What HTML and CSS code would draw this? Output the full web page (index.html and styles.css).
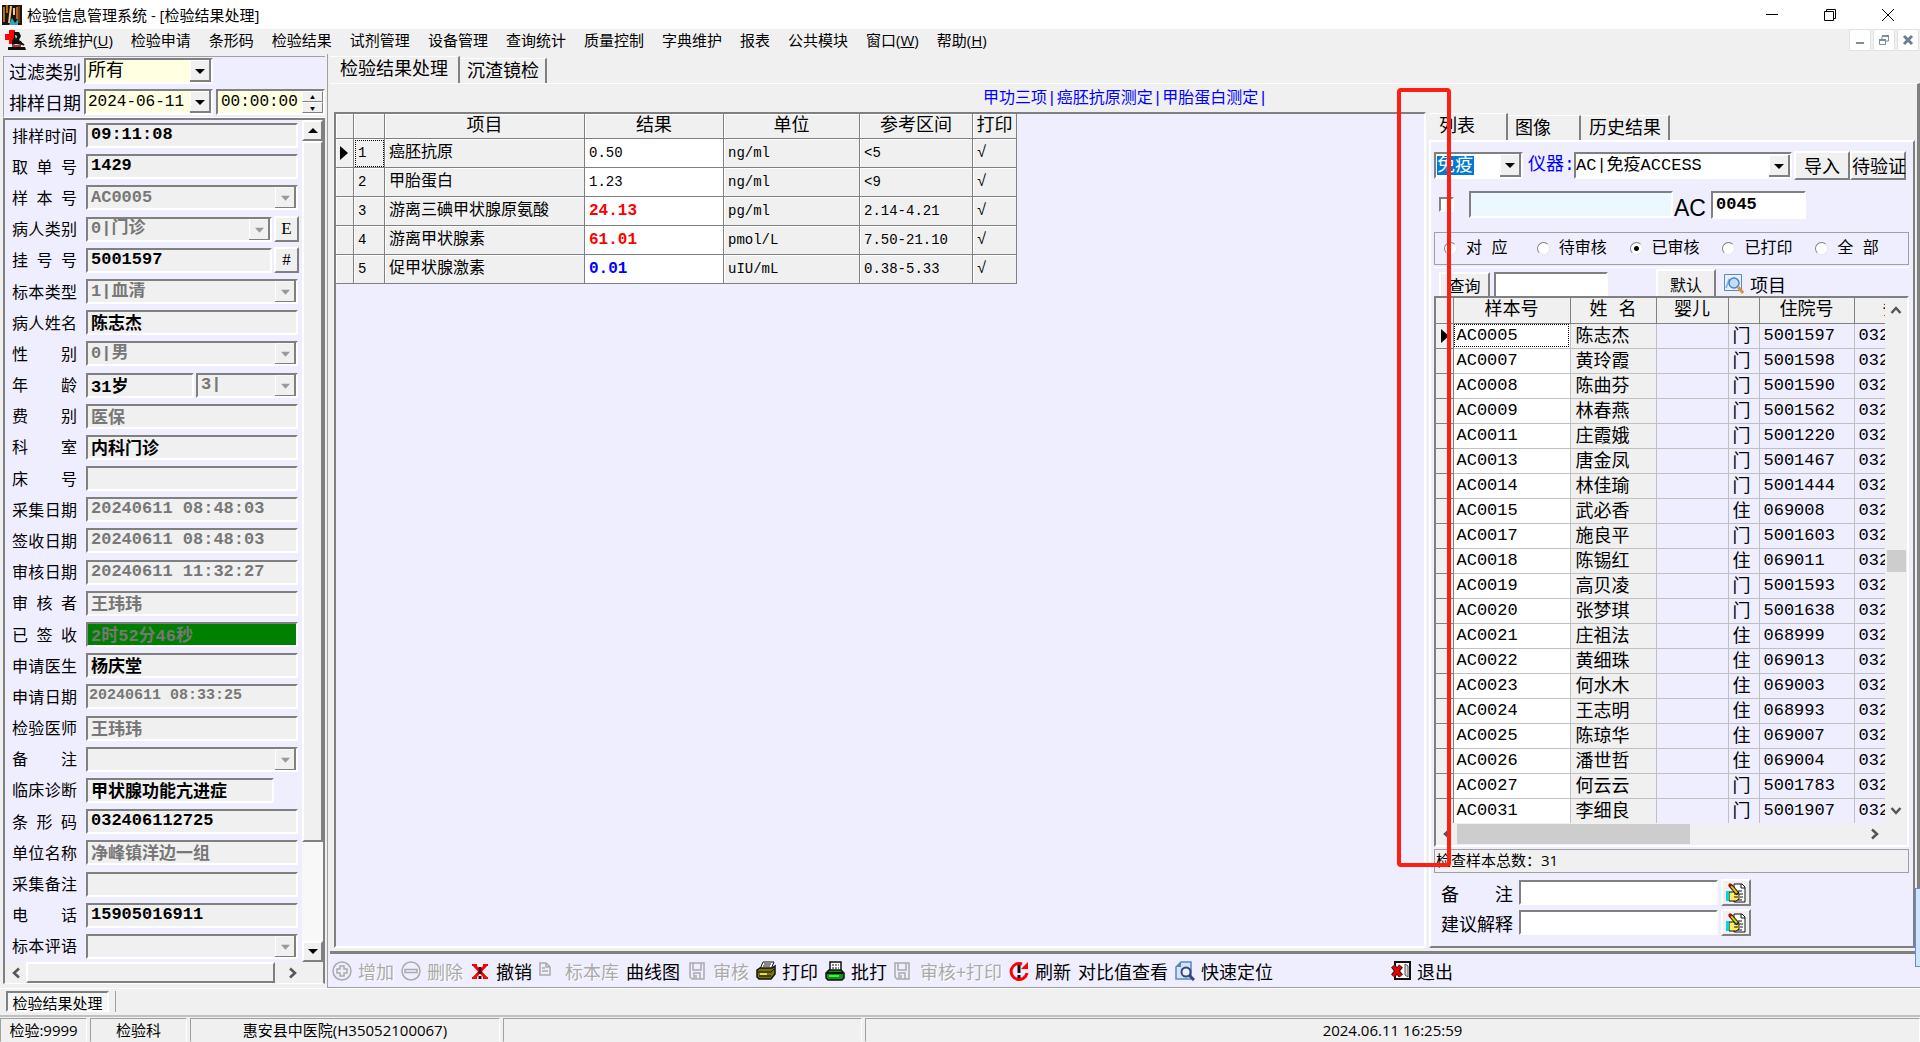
FILE: index.html
```html
<!DOCTYPE html>
<html lang="zh-CN">
<head>
    <meta charset="utf-8">
    <title>检验信息管理系统 - [检验结果处理]</title>
    <link rel="stylesheet" href="styles.css">
</head>
<body>
    <header class="titlebar">
        <svg class="app-icon" viewBox="0 0 20 20"><rect width="20" height="20" fill="#1d1410"/><path d="M2 2v15M5 0v8M15 2v12" stroke="#b0672a" stroke-width="2"/><path d="M9 1l-2 17M12 3v7" stroke="#f3c98b" stroke-width="2"/><path d="M7 20l3-7 3 5 3-4v6z" fill="#2fa7c4"/><path d="M17 1v17" stroke="#c4552a"/></svg>
        <h1>检验信息管理系统 - [检验结果处理]</h1>
        <div class="window-buttons">
            <button aria-label="最小化"><svg width="14" height="14" viewBox="0 0 14 14"><path d="M1 6.500h12" stroke="#000"/></svg></button>
            <button aria-label="还原"><svg width="14" height="14" viewBox="0 0 14 14"><path d="M1.500 3.500h9v9h-9zM3.500 3.500v-2h9v9h-2" fill="none" stroke="#000"/></svg></button>
            <button aria-label="关闭"><svg width="14" height="14" viewBox="0 0 14 14"><path d="M1 1l12 12M13 1L1 13" stroke="#000"/></svg></button>
        </div>
    </header>

    <nav class="menubar">
        <svg class="menu-icon" viewBox="0 0 22 20"><path d="M4 0h6v4h4v6h-4v4H4v-4H0V4h4z" fill="#f00"/><path d="M9 2h5l2 4-2 4 3 2v3l-6-1-4 1v-4l2-4z" fill="#111"/><path d="M10 5l2 1-1 3z" fill="#fff"/><path d="M3 17h17l1 3H3z" fill="#111"/><path d="M7 15h9v2H7z" fill="#a33"/><path d="M14 12l5 3" stroke="#111" stroke-width="2"/></svg>
        <button>系统维护(<u>U</u>)</button>
        <button>检验申请</button>
        <button>条形码</button>
        <button>检验结果</button>
        <button>试剂管理</button>
        <button>设备管理</button>
        <button>查询统计</button>
        <button>质量控制</button>
        <button>字典维护</button>
        <button>报表</button>
        <button>公共模块</button>
        <button>窗口(<u>W</u>)</button>
        <button>帮助(<u>H</u>)</button>
        <div class="mdi-buttons">
            <button aria-label="最小化子窗口"><svg width="12" height="12" viewBox="0 0 12 12"><path d="M2 9h8" stroke="#7d8b9f" stroke-width="2"/></svg></button>
            <button aria-label="还原子窗口"><svg width="12" height="12" viewBox="0 0 12 12"><path d="M1.500 5.500h6v5h-6zM4 5V2.500h6.500V7H8" fill="none" stroke="#7d8b9f"/><path d="M1 6h7M4 2h7" stroke="#7d8b9f" stroke-width="2"/></svg></button>
            <button aria-label="关闭子窗口"><svg width="12" height="12" viewBox="0 0 12 12"><path d="M2 2l8 8M10 2l-8 8" stroke="#6d7f93" stroke-width="3"/></svg></button>
        </div>
    </nav>

    <div class="workspace">
        <aside class="side">
            <div class="filter">
                <div class="filter-row">
                    <label for="filterType">过滤类别</label>
                    <select id="filterType" class="combo cream cjk"><option>所有</option></select>
                </div>
                <div class="filter-row">
                    <label for="filterDate">排样日期</label>
                    <select id="filterDate" class="combo cream"><option>2024-06-11</option></select>
                    <div class="spin">
                        <input type="text" value="00:00:00" aria-label="排样时刻">
                        <button aria-label="增加时间">▲</button>
                        <button aria-label="减少时间">▼</button>
                    </div>
                </div>
            </div>

            <div class="patient">
                <form class="fields">
                    <div class="row"><label for="f1">排样时间</label><input id="f1" class="field" value="09:11:08" readonly></div>
                    <div class="row"><label for="f2">取 单 号</label><input id="f2" class="field" value="1429" readonly></div>
                    <div class="row"><label for="f3">样 本 号</label><select id="f3" class="combo off" disabled><option>AC0005</option></select></div>
                    <div class="row"><label for="f4">病人类别</label><select id="f4" class="combo off" disabled><option>0|门诊</option></select><button type="button" class="mini">E</button></div>
                    <div class="row"><label for="f5">挂 号 号</label><input id="f5" class="field" value="5001597" readonly><button type="button" class="mini">#</button></div>
                    <div class="row"><label for="f6">标本类型</label><select id="f6" class="combo off" disabled><option>1|血清</option></select></div>
                    <div class="row"><label for="f7">病人姓名</label><input id="f7" class="field" value="陈志杰" readonly></div>
                    <div class="row"><label for="f8">性 别</label><select id="f8" class="combo off" disabled><option>0|男</option></select></div>
                    <div class="row"><label for="f9">年 龄</label><input id="f9" class="field" value="31岁" readonly><select class="combo off unit" aria-label="年龄单位" disabled><option>3|</option></select></div>
                    <div class="row"><label for="f10">费 别</label><input id="f10" class="field off" value="医保" readonly></div>
                    <div class="row"><label for="f11">科 室</label><input id="f11" class="field" value="内科门诊" readonly></div>
                    <div class="row"><label for="f12">床 号</label><input id="f12" class="field" readonly></div>
                    <div class="row"><label for="f13">采集日期</label><input id="f13" class="field off" value="20240611 08:48:03" readonly></div>
                    <div class="row"><label for="f14">签收日期</label><input id="f14" class="field off" value="20240611 08:48:03" readonly></div>
                    <div class="row"><label for="f15">审核日期</label><input id="f15" class="field off" value="20240611 11:32:27" readonly></div>
                    <div class="row"><label for="f16">审 核 者</label><input id="f16" class="field off" value="王玮玮" readonly></div>
                    <div class="row"><label for="f17">已 签 收</label><input id="f17" class="field off signed" value="2时52分46秒" readonly></div>
                    <div class="row"><label for="f18">申请医生</label><input id="f18" class="field" value="杨庆堂" readonly></div>
                    <div class="row"><label for="f19">申请日期</label><input id="f19" class="field off small" value="20240611 08:33:25" readonly></div>
                    <div class="row"><label for="f20">检验医师</label><input id="f20" class="field off" value="王玮玮" readonly></div>
                    <div class="row"><label for="f21">备 注</label><select id="f21" class="combo off" disabled><option></option></select></div>
                    <div class="row diagnosis"><label for="f22">临床诊断</label><input id="f22" class="field" value="甲状腺功能亢进症" readonly></div>
                    <div class="row"><label for="f23">条 形 码</label><input id="f23" class="field" value="032406112725" readonly></div>
                    <div class="row"><label for="f24">单位名称</label><input id="f24" class="field off" value="净峰镇洋边一组" readonly></div>
                    <div class="row"><label for="f25">采集备注</label><input id="f25" class="field" readonly></div>
                    <div class="row"><label for="f26">电 话</label><input id="f26" class="field" value="15905016911" readonly></div>
                    <div class="row"><label for="f27">标本评语</label><select id="f27" class="combo off" disabled><option></option></select></div>
                </form>
                <div class="vscroll">
                    <button aria-label="向上滚动"><svg width="10" height="5" viewBox="0 0 10 5"><path d="M0 5h10L5 0z"/></svg></button>
                    <div class="thumb"></div>
                    <div class="track"></div>
                    <button aria-label="向下滚动"><svg width="10" height="5" viewBox="0 0 10 5"><path d="M0 0h10L5 5z"/></svg></button>
                </div>
                <div class="hscroll">
                    <button aria-label="向左滚动"><svg width="10" height="12" viewBox="0 0 10 12"><path d="M8 1.500L3 6l5 4.500" fill="none" stroke="#555" stroke-width="2.500"/></svg></button>
                    <div class="thumb"></div>
                    <button aria-label="向右滚动"><svg width="10" height="12" viewBox="0 0 10 12"><path d="M2 1.500L7 6l-5 4.500" fill="none" stroke="#555" stroke-width="2.500"/></svg></button>
                </div>
            </div>
        </aside>

        <main class="main">
            <div class="tabs">
                <button class="tab active">检验结果处理</button>
                <button class="tab">沉渣镜检</button>
            </div>
            <section class="page">
                <p class="tests">甲功三项|癌胚抗原测定|甲胎蛋白测定|</p>
                <div class="columns">
                    <div class="results">
                        <table>
                            <colgroup><col class="r-mark"><col class="r-no"><col class="r-item"><col class="r-value"><col class="r-unit"><col class="r-range"><col class="r-print"></colgroup>
                            <thead>
                                <tr><th></th><th></th><th>项目</th><th>结果</th><th>单位</th><th>参考区间</th><th>打印</th></tr>
                            </thead>
                            <tbody>
                                <tr><td><i class="pointer"></i></td><td class="focus">1</td><td class="name">癌胚抗原</td><td class="value">0.50</td><td>ng/ml</td><td>&lt;5</td><td class="tick">√</td></tr>
                                <tr><td></td><td>2</td><td class="name">甲胎蛋白</td><td class="value">1.23</td><td>ng/ml</td><td>&lt;9</td><td class="tick">√</td></tr>
                                <tr><td></td><td>3</td><td class="name">游离三碘甲状腺原氨酸</td><td class="value high">24.13</td><td>pg/ml</td><td>2.14-4.21</td><td class="tick">√</td></tr>
                                <tr><td></td><td>4</td><td class="name">游离甲状腺素</td><td class="value high">61.01</td><td>pmol/L</td><td>7.50-21.10</td><td class="tick">√</td></tr>
                                <tr><td></td><td>5</td><td class="name">促甲状腺激素</td><td class="value low">0.01</td><td>uIU/mL</td><td>0.38-5.33</td><td class="tick">√</td></tr>
                            </tbody>
                        </table>
                    </div>

                    <section class="list">
                        <div class="tabs list-tabs">
                            <button class="tab active">列表</button>
                            <button class="tab">图像</button>
                            <button class="tab">历史结果</button>
                        </div>
                        <div class="list-body">
                            <div class="device">
                                <select class="combo white picked" aria-label="专业组"><option>免疫</option></select>
                                <label for="device">仪器:</label>
                                <select id="device" class="combo white device-select"><option>AC|免疫ACCESS</option></select>
                                <button class="btn">导入</button>
                                <button class="btn">待验证</button>
                            </div>
                            <div class="lookup">
                                <input type="checkbox" aria-label="启用查找">
                                <input type="text" class="field cyan" aria-label="查找内容">
                                <label for="sampleNo">AC</label>
                                <input type="text" id="sampleNo" class="field sample" value="0045">
                            </div>
                            <div class="states">
                                <label><input type="radio" name="state">对 应</label>
                                <label><input type="radio" name="state">待审核</label>
                                <label><input type="radio" name="state" checked>已审核</label>
                                <label><input type="radio" name="state">已打印</label>
                                <label><input type="radio" name="state">全 部</label>
                            </div>
                            <div class="query">
                                <button class="btn search">查询</button>
                                <input type="text" class="field" aria-label="查询条件">
                                <button class="btn default">默认</button>
                                <button class="flat"><svg width="20" height="20" viewBox="0 0 20 20"><path d="M.5.5h17v16H.5z" fill="#e8f1fb" stroke="#5b86c8"/><path d="M2 14l3-8 3 4 3-6" fill="none" stroke="#8fb3e0" stroke-width="2"/><circle cx="10" cy="9" r="5" fill="#bfe0f7" stroke="#4f82b8" stroke-width="1.500"/><path d="M14 13l5 6" stroke="#e39033" stroke-width="3"/></svg>项目</button>
                            </div>
                            <div class="grid">
                                <div class="grid-view">
                                    <table>
                                        <colgroup><col class="s-mark"><col class="s-no"><col class="s-name"><col class="s-baby"><col class="s-type"><col class="s-case"><col class="s-code"></colgroup>
                                        <thead>
                                            <tr><th></th><th>样本号</th><th>姓 名</th><th>婴儿</th><th></th><th>住院号</th><th>条形码</th></tr>
                                        </thead>
                                        <tbody>
                                            <tr><td><i class="pointer"></i></td><td class="focus">AC0005</td><td>陈志杰</td><td></td><td>门</td><td>5001597</td><td>032</td></tr>
                                            <tr><td></td><td>AC0007</td><td>黄玲霞</td><td></td><td>门</td><td>5001598</td><td>032</td></tr>
                                            <tr><td></td><td>AC0008</td><td>陈曲芬</td><td></td><td>门</td><td>5001590</td><td>032</td></tr>
                                            <tr><td></td><td>AC0009</td><td>林春燕</td><td></td><td>门</td><td>5001562</td><td>032</td></tr>
                                            <tr><td></td><td>AC0011</td><td>庄霞娥</td><td></td><td>门</td><td>5001220</td><td>032</td></tr>
                                            <tr><td></td><td>AC0013</td><td>唐金凤</td><td></td><td>门</td><td>5001467</td><td>032</td></tr>
                                            <tr><td></td><td>AC0014</td><td>林佳瑜</td><td></td><td>门</td><td>5001444</td><td>032</td></tr>
                                            <tr><td></td><td>AC0015</td><td>武必香</td><td></td><td>住</td><td>069008</td><td>032</td></tr>
                                            <tr><td></td><td>AC0017</td><td>施良平</td><td></td><td>门</td><td>5001603</td><td>032</td></tr>
                                            <tr><td></td><td>AC0018</td><td>陈锡红</td><td></td><td>住</td><td>069011</td><td>032</td></tr>
                                            <tr><td></td><td>AC0019</td><td>高贝凌</td><td></td><td>门</td><td>5001593</td><td>032</td></tr>
                                            <tr><td></td><td>AC0020</td><td>张梦琪</td><td></td><td>门</td><td>5001638</td><td>032</td></tr>
                                            <tr><td></td><td>AC0021</td><td>庄祖法</td><td></td><td>住</td><td>068999</td><td>032</td></tr>
                                            <tr><td></td><td>AC0022</td><td>黄细珠</td><td></td><td>住</td><td>069013</td><td>032</td></tr>
                                            <tr><td></td><td>AC0023</td><td>何水木</td><td></td><td>住</td><td>069003</td><td>032</td></tr>
                                            <tr><td></td><td>AC0024</td><td>王志明</td><td></td><td>住</td><td>068993</td><td>032</td></tr>
                                            <tr><td></td><td>AC0025</td><td>陈琼华</td><td></td><td>住</td><td>069007</td><td>032</td></tr>
                                            <tr><td></td><td>AC0026</td><td>潘世哲</td><td></td><td>住</td><td>069004</td><td>032</td></tr>
                                            <tr><td></td><td>AC0027</td><td>何云云</td><td></td><td>门</td><td>5001783</td><td>032</td></tr>
                                            <tr><td></td><td>AC0031</td><td>李细良</td><td></td><td>门</td><td>5001907</td><td>032</td></tr>
                                        </tbody>
                                    </table>
                                </div>
                                <div class="grid-v">
                                    <button aria-label="列表向上"><svg width="12" height="10" viewBox="0 0 12 10"><path d="M1.500 8L6 3l4.500 5" fill="none" stroke="#555" stroke-width="2.500"/></svg></button>
                                    <div class="thumb"></div>
                                    <button aria-label="列表向下"><svg width="12" height="10" viewBox="0 0 12 10"><path d="M1.500 2L6 7l4.500-5" fill="none" stroke="#555" stroke-width="2.500"/></svg></button>
                                </div>
                                <div class="grid-h">
                                    <button aria-label="列表向左"><svg width="10" height="12" viewBox="0 0 10 12"><path d="M8 1.500L3 6l5 4.500" fill="none" stroke="#555" stroke-width="2.500"/></svg></button>
                                    <div class="thumb"></div>
                                    <button aria-label="列表向右"><svg width="10" height="12" viewBox="0 0 10 12"><path d="M2 1.500L7 6l-5 4.500" fill="none" stroke="#555" stroke-width="2.500"/></svg></button>
                                </div>
                            </div>
                            <div class="total">检查样本总数：31</div>
                            <div class="note">
                                <label for="note">备 注</label>
                                <input type="text" id="note" class="field">
                                <button class="btn" aria-label="编辑备注"><svg width="20" height="20" viewBox="0 0 20 20"><use href="#edit"/></svg></button>
                            </div>
                            <div class="note">
                                <label for="advice">建议解释</label>
                                <input type="text" id="advice" class="field">
                                <button class="btn" aria-label="编辑建议"><svg width="20" height="20" viewBox="0 0 20 20"><use href="#edit"/></svg></button>
                            </div>
                        </div>
                    </section>
                </div>
            </section>

            <div class="toolbar">
                <button disabled><svg viewBox="0 0 20 20"><path d="M10 1a9 9 0 1 0 0 18 9 9 0 0 0 0-18zM8 5h4v3h3v4h-3v3H8v-3H5V8h3z" fill="none" stroke="#aaa" stroke-width="1.500"/></svg>增加</button>
                <button disabled><svg viewBox="0 0 20 20"><circle cx="10" cy="10" r="9" fill="none" stroke="#aaa" stroke-width="1.500"/><path d="M4 8.500h12v3H4z" fill="none" stroke="#aaa" stroke-width="1.500"/></svg>删除</button>
                <button><svg viewBox="0 0 20 20"><path d="M4 4l12 13M16 4L4 17" stroke="#f00" stroke-width="3"/><path d="M10 6v7M10 15v3" stroke="#300" stroke-width="3"/><path d="M2 4h5M13 4h5M2 17h5M13 17h5" stroke="#f00" stroke-width="2"/></svg>撤销</button>
                <button disabled><svg viewBox="0 0 20 20"><path d="M1 2h6l4 4v8H1zM7 2v4h4M3 7h3M3 10h6" fill="none" stroke="#aaa" stroke-width="1.500"/></svg>标本库</button>
                <button>曲线图</button>
                <button disabled><svg viewBox="0 0 20 20"><path d="M3 2h14v16H5l-2-2zM6 2v7h8V2M7 18v-6h6v6M9 14v3" fill="none" stroke="#aaa" stroke-width="1.500"/></svg>审核</button>
                <button><svg viewBox="0 0 20 20"><path d="M7 1h11l-3 7H4z" fill="#fff" stroke="#111"/><path d="M8 3h7M7 5h7" stroke="#111"/><path d="M1 9l3-2h12l3-2v8l-4 5H3l-2-2z" fill="#77720c" stroke="#111" stroke-width="1.500"/><path d="M2 11h13l3-3M3 15h12" fill="none" stroke="#111"/><path d="M4 13h7" stroke="#e5df35" stroke-width="2"/></svg>打印</button>
                <button><svg viewBox="0 0 20 20"><path d="M5 1h11v9H5z" fill="#fff" stroke="#111" stroke-width="1.500"/><path d="M7 4h7M7 7h7" stroke="#111" stroke-dasharray="2 1"/><path d="M1 12l3-3h12l3 3v5l-2 2H3l-2-2z" fill="#1d8a1d" stroke="#111" stroke-width="1.500"/><path d="M2 12h16" stroke="#111" stroke-width="2"/><path d="M4 15h10" stroke="#2cff2c" stroke-width="2"/></svg>批打</button>
                <button disabled><svg viewBox="0 0 20 20"><path d="M1 2h14v16H3l-2-2zM4 2v7h8V2M5 18v-6h6v6M7 14v3" fill="none" stroke="#aaa" stroke-width="1.500"/></svg>审核+打印</button>
                <button><svg viewBox="0 0 20 20"><path d="M13 3a8 8 0 1 0 5 9" fill="none" stroke="#f00" stroke-width="3"/><path d="M12 8h7V1z" fill="#f00"/><path d="M10 4v8M10 14v3" stroke="#111" stroke-width="3"/></svg>刷新</button>
                <button>对比值查看</button>
                <button><svg viewBox="0 0 20 20"><path d="M6 1h10v17H1V6z" fill="#d6e4f8" stroke="#5a86c9" stroke-width="1.500"/><path d="M6 1v5H1z" fill="#5a86c9"/><circle cx="11" cy="11" r="4.500" fill="#eaf2fc" stroke="#33477c" stroke-width="2"/><path d="M14 14l5 5" stroke="#33477c" stroke-width="3"/></svg>快速定位</button>
                <button class="exit"><svg viewBox="0 0 20 20"><path d="M4 1h15v17H4z" fill="#fff" stroke="#111" stroke-width="2"/><path d="M14 3l3 2v11l-3-2z" fill="#ddd" stroke="#555"/><path d="M2 5l8 10M10 5L2 15" stroke="#111" stroke-width="5"/><path d="M2 5l8 10M10 5L2 15" stroke="#e00" stroke-width="3"/></svg>退出</button>
            </div>
        </main>
    </div>

    <div class="taskbar"><button>检验结果处理</button></div>

    <footer class="statusbar">
        <span>检验:9999</span>
        <span>检验科</span>
        <span>惠安县中医院(H35052100067)</span>
        <span></span>
        <span>2024.06.11 16:25:59</span>
    </footer>

    <div class="marker"></div>
    <div class="dock"></div>

    <svg class="sprite">
        <symbol id="edit" viewBox="0 0 20 20">
            <path d="M8 1h8l3 3v15H8z" fill="#fff" stroke="#111"/>
            <path d="M15 1v4h4M12 8h4M13 11h4M14 14h3M11 17h5" fill="none" stroke="#111"/>
            <path d="M3 9h6l4 2v5l-3 2H3z" fill="#ffec60" stroke="#111"/>
            <path d="M0 8h3v10H0z" fill="#00d8e8"/>
            <path d="M8 11h4M8 14h4" stroke="#111"/>
            <path d="M4 2l8 9" stroke="#111" stroke-width="4"/>
            <path d="M5 3l6 7" stroke="#d8c800" stroke-width="2"/>
            <path d="M3 1l2 2" stroke="#c00" stroke-width="3"/>
        </symbol>
    </svg>
</body>
</html>
```
FILE: styles.css
```css
* {
  box-sizing: border-box;
}

body {
  margin: 0;
  height: 100vh;
  display: flex;
  flex-direction: column;
  overflow: hidden;
  background-color: #f0f0f0;
  color: #000;
  font-family: "Open Sans", "Noto Sans CJK SC", sans-serif;
  font-size: 15px;
  line-height: 20px;
}

button, input, select {
  margin: 0;
  font: inherit;
  color: inherit;
}

button {
  padding: 0;
  border: none;
  background: none;
  white-space: nowrap;
}

svg {
  flex: none;
  display: block;
}

/* title and menu */
.titlebar {
  flex: none;
  height: 29px;
  display: flex;
  align-items: center;
  padding: 0 3px 0 2px;
  background-color: #fff;
}

.app-icon {
  width: 20px;
  height: 20px;
}

.titlebar h1 {
  margin: 0 0 0 5px;
  font-size: 15px;
  font-weight: normal;
}

.window-buttons {
  margin-left: auto;
  display: flex;
}

.window-buttons button {
  width: 58px;
  height: 28px;
  display: grid;
  place-items: center;
}

.menubar {
  flex: none;
  height: 25px;
  display: flex;
  align-items: center;
  gap: 18px;
  padding: 0 1px 3px 5px;
}

.menu-icon {
  width: 22px;
  height: 20px;
  margin-right: -12px;
}

.mdi-buttons {
  margin-left: auto;
  display: flex;
  gap: 2px;
}

.mdi-buttons button {
  width: 22px;
  height: 22px;
  display: grid;
  place-items: center;
  background-color: #fff;
  border: 1px solid #e2e2e2;
}

.workspace {
  flex: 1;
  min-height: 0;
  display: grid;
  grid-template-columns: 328px minmax(0, 1fr);
}

/* shared controls */
.field, .combo {
  min-width: 0;
  height: 25px;
  padding: 0 3px;
  border: 2px solid;
  border-color: #808080 #fff #fff #808080;
  border-radius: 0;
  background-color: #f0f0f0;
  font: bold 17px/20px "Liberation Mono", "Noto Sans CJK SC", monospace;
  outline: none;
}

.combo {
  appearance: none;
  background-repeat: no-repeat;
  background-position: right center;
  background-image: url("data:image/svg+xml,%3Csvg xmlns='http://www.w3.org/2000/svg' width='21' height='22'%3E%3Cpath fill='%23f0f0f0' d='M0 0h21v22H0z'/%3E%3Cpath d='M0.500 22V0.500H21' fill='none' stroke='%23fff'/%3E%3Cpath d='M20 0v21H0' fill='none' stroke='%23808080' stroke-width='2'/%3E%3Cpath d='M5 9h10l-5 5z'/%3E%3C/svg%3E");
  font-weight: normal;
  opacity: 1;
}

.off {
  color: #777;
}

.combo.off {
  font-weight: bold;
  background-image: url("data:image/svg+xml,%3Csvg xmlns='http://www.w3.org/2000/svg' width='21' height='22'%3E%3Cpath fill='%23f0f0f0' d='M0 0h21v22H0z'/%3E%3Cpath d='M0.500 22V0.500H21' fill='none' stroke='%23fff'/%3E%3Cpath d='M20 0v21H0' fill='none' stroke='%23808080' stroke-width='2'/%3E%3Cpath d='M6 9h9l-4.500 5z' fill='%23999'/%3E%3C/svg%3E");
}

.btn, .mini {
  border: 2px solid;
  border-color: #fff #808080 #808080 #fff;
  background-color: #f0f0f0;
}

.white {
  background-color: #fff;
}

.cream {
  background-color: #ffffe1;
}

/* left side */
.side {
  display: flex;
  flex-direction: column;
  min-height: 0;
  padding: 2px 2px 4px 3px;
  border-right: 1px solid #a0a0a0;
}

.filter {
  display: flex;
  flex-direction: column;
  gap: 5px;
  height: 62px;
  padding: 1px 0 0 5px;
  background-color: #efeeff;
  border: 1px solid #a0a0a0;
  border-right: none;
  border-bottom-color: #fff;
}

.filter-row {
  display: flex;
  align-items: center;
  font-family: "Noto Sans CJK SC", sans-serif;
  font-size: 18px;
}

.filter-row label {
  width: 75px;
}

.filter-row .combo {
  width: 129px;
  height: 26px;
  padding: 0 2px;
  font-size: 16px;
}

.filter-row .cjk {
  font-size: 18px;
}

.spin {
  flex: 1;
  height: 26px;
  margin-left: 3px;
  display: grid;
  grid-template-columns: 1fr 21px;
  grid-template-rows: 1fr 1fr;
  border: 2px solid;
  border-color: #808080 #fff #fff #808080;
}

.spin input {
  grid-row: 1 / 3;
  min-width: 0;
  padding: 0 3px;
  border: none;
  background-color: #ffffe1;
  font: 16px/20px "Liberation Mono", monospace;
}

.spin button {
  border: 1px solid;
  border-color: #fff #808080 #808080 #fff;
  background-color: #f0f0f0;
  font-size: 5px;
  line-height: 8px;
}

.patient {
  flex: 1;
  min-height: 0;
  display: grid;
  grid-template-columns: minmax(0, 1fr) 21px;
  grid-template-rows: minmax(0, 1fr) 21px;
  border: 2px solid #808080;
  border-bottom: 1px solid #fff;
  background-color: #efeeff;
}

.fields {
  display: grid;
  grid-template-columns: minmax(0, 1fr);
  grid-auto-rows: 1fr;
  align-items: center;
  padding: 0 4px 0 7px;
}

.row {
  display: flex;
  align-items: center;
}

.row label {
  flex: none;
  width: 65px;
  margin-right: 9px;
  padding-bottom: 2px;
  font-family: "Noto Sans CJK SC", sans-serif;
  font-size: 16px;
  white-space: nowrap;
  text-align-last: justify;
}

.row .field, .row .combo {
  flex: 1;
}

.row .field {
  padding-bottom: 2px;
}

.row .small {
  font-size: 15px;
  padding-left: 1px;
}

.row .unit {
  flex: none;
  width: 102px;
  margin-left: 2px;
}

.row .signed {
  background-color: #008000;
}

.diagnosis {
  padding-right: 24px;
}

.mini {
  width: 25px;
  height: 26px;
  margin: 0 -1px 0 2px;
  font: 17px/20px "Liberation Serif", serif;
}

.vscroll {
  display: flex;
  flex-direction: column;
}

.vscroll button {
  height: 21px;
  display: grid;
  place-items: center;
  border: 2px solid;
  border-color: #fff #808080 #808080 #fff;
  background-color: #f0f0f0;
}

.vscroll .thumb {
  flex: 7;
  background-color: #f0f0f0;
  border: 2px solid;
  border-color: #fff #808080 #808080 #fff;
}

.vscroll .track {
  flex: 1;
  background-color: #f8f8f8;
}

.hscroll {
  grid-column: 1 / 3;
  display: flex;
  background-color: #f0f0f0;
  padding-right: 20px;
}

.hscroll button, .grid-h button {
  width: 21px;
  display: grid;
  place-items: center;
}

.hscroll .thumb {
  flex: 1;
  margin-right: 7px;
  border: 2px solid;
  border-color: #fff #808080 #808080 #fff;
}

/* main area */
.main {
  display: flex;
  flex-direction: column;
  min-width: 0;
  min-height: 0;
}

.tabs {
  flex: none;
  display: flex;
  align-items: flex-end;
  height: 29px;
  padding: 2px 0 0 2px;
}

.tab {
  height: 25px;
  padding: 0 6px 4px 7px;
  border-top: 1px solid #fff;
  border-right: 2px solid #808080;
  font-family: "Noto Sans CJK SC", sans-serif;
  font-size: 18px;
  line-height: 20px;
  text-align: left;
}

.tab.active {
  height: 27px;
  padding: 0 10px 6px;
}

.page {
  flex: 1;
  min-height: 0;
  display: flex;
  flex-direction: column;
  margin-left: 2px;
  padding: 0 0 3px 4px;
  border-top: 1px solid #fff;
  border-right: 3px solid #808080;
  border-bottom: 3px solid #808080;
}

.tests {
  margin: 5px 0 3px;
  text-align: center;
  color: #00f;
  font: 16px/20px "Liberation Mono", "Noto Sans CJK SC", monospace;
}

.columns {
  flex: 1;
  min-height: 0;
  display: flex;
  gap: 3px;
}

.results {
  flex: 1;
  min-width: 0;
  background-color: #efeeff;
  border: 2px solid;
  border-color: #808080 #fff #fff #808080;
}

table {
  table-layout: fixed;
  border-collapse: collapse;
}

th, td {
  padding: 0 4px;
  text-align: left;
  white-space: nowrap;
}

th {
  padding: 0 0 1px;
  font: 18px/20px "Liberation Mono", "Noto Sans CJK SC", monospace;
  text-align: center;
  background-color: #f0f0f0;
}

.results table {
  width: 681px;
  margin: -1px 0 0 -1px;
  background-color: #f0f0f0;
}

.results th, .results td {
  border: 1px solid #808080;
  box-shadow: inset 1px 1px #fff;
}

.results th {
  height: 25px;
}

.results td {
  height: 29px;
  font: 14px/20px "Liberation Mono", "Noto Sans CJK SC", monospace;
}

.results .name, .results .tick {
  font-size: 16px;
}

.results .value {
  background-color: #fff;
}

.results .high, .results .low {
  font-weight: bold;
  font-size: 16px;
  color: #f00;
}

.results .low {
  color: #00f;
}

.r-mark { width: 18px; }
.r-no { width: 31px; }
.r-item { width: 200px; }
.r-value { width: 139px; }
.r-unit { width: 136px; }
.r-range { width: 113px; }
.r-print { width: 44px; }

.focus {
  outline: 1px dotted #000;
  outline-offset: -2px;
}

.pointer {
  display: block;
  border: 7px solid transparent;
  border-left: 8px solid #000;
  border-right: none;
}

/* sample list */
.list {
  flex: none;
  width: 488px;
  display: flex;
  flex-direction: column;
}

.list-tabs {
  height: 28px;
  padding: 1px 0 0;
}

.list-tabs .tab {
  width: 73px;
}

.list-tabs .active {
  width: 79px;
}

.list-tabs .tab:last-child {
  width: auto;
  padding: 0 7px 4px 8px;
}

.list-body {
  flex: 1;
  min-height: 0;
  display: flex;
  flex-direction: column;
  margin-right: 2px;
  padding: 9px 4px 7px 3px;
  background-color: #efeeff;
  border: 2px solid;
  border-color: #fff #808080 #808080 #fff;
}

.device {
  display: flex;
  align-items: center;
  height: 29px;
}

.device .combo {
  height: 27px;
  padding: 0;
}

.device .picked {
  width: 89px;
  background-image: url("data:image/svg+xml,%3Csvg xmlns='http://www.w3.org/2000/svg' width='21' height='23'%3E%3Cpath fill='%23f0f0f0' d='M0 0h21v23H0z'/%3E%3Cpath d='M0.500 23V0.500H21' fill='none' stroke='%23fff'/%3E%3Cpath d='M20 0v22H0' fill='none' stroke='%23808080' stroke-width='2'/%3E%3Cpath d='M5 9h10l-5 5z'/%3E%3C/svg%3E"), linear-gradient(#0078d7, #0078d7);
  background-position: right center, 1px center;
  background-size: auto, 37px 19px;
  color: #fff;
  font-size: 18px;
  text-indent: 1px;
}

.device label {
  width: 51px;
  padding: 0 0 2px 5px;
  font: 18px/20px "Liberation Mono", "Noto Sans CJK SC", monospace;
  color: #00f;
  white-space: nowrap;
}

.device .device-select {
  width: 218px;
  margin-right: 2px;
}

.device .btn {
  width: 56px;
  height: 29px;
  padding-bottom: 2px;
  font-family: "Noto Sans CJK SC", sans-serif;
  font-size: 18px;
}

.lookup {
  display: flex;
  align-items: center;
  height: 27px;
  margin-top: 11px;
  padding-left: 5px;
}

.lookup input[type="checkbox"] {
  appearance: none;
  width: 15px;
  height: 15px;
  border: 2px solid;
  border-color: #808080 #fff #fff #808080;
  background-color: #fff;
}

.lookup .cyan {
  width: 204px;
  height: 27px;
  margin-left: 15px;
  background-color: #ebf8ff;
}

.lookup label {
  width: 38px;
  padding: 6px 0 0 1px;
  font-family: "Liberation Sans", sans-serif;
  font-size: 23px;
}

.lookup .sample {
  width: 95px;
  height: 28px;
  background-color: #fff;
}

.states {
  display: flex;
  align-items: center;
  height: 33px;
  margin: 14px 0 2px;
  padding-left: 9px;
  border: 1px solid #a0a0a0;
  font: 16px/20px "Liberation Mono", "Noto Sans CJK SC", monospace;
}

.states label {
  display: flex;
  align-items: center;
  width: 93px;
}

.states input {
  appearance: none;
  width: 13px;
  height: 13px;
  margin-right: 9px;
  border: 1px solid;
  border-color: #808080 #e8e8e8 #e8e8e8 #808080;
  border-radius: 50%;
  background-color: #fff;
}

.states input:checked {
  background-image: radial-gradient(#000 0 2px, transparent 3px);
}

.query {
  flex: none;
  display: flex;
  align-items: flex-end;
  height: 29px;
  padding-left: 5px;
  border-top: 1px solid #fff;
  font-family: "Noto Sans CJK SC", sans-serif;
  font-size: 18px;
}

.query .search {
  width: 51px;
  height: 24px;
  font-size: 16px;
  border-bottom: none;
}

.query .field {
  width: 114px;
  height: 24px;
  margin-left: 4px;
  border-bottom: none;
  background-color: #fff;
}

.query .default {
  width: 60px;
  height: 27px;
  margin-left: 48px;
  font-size: 16px;
  border-bottom: none;
}

.query .flat {
  display: flex;
  align-items: center;
  gap: 6px;
  margin-left: 8px;
  padding-bottom: 2px;
}

.grid {
  flex: 1;
  min-height: 0;
  display: grid;
  grid-template-columns: minmax(0, 1fr) 22px;
  grid-template-rows: minmax(0, 1fr) 22px;
  border: 2px solid;
  border-color: #808080 #fff #fff #808080;
  background-color: #f0f0f0;
}

.grid-view {
  overflow: hidden;
}

.grid table {
  width: 529px;
}

.grid td, .grid th {
  border: 1px solid #c0c0c0;
  border-top: none;
  border-left: none;
}

.grid th {
  height: 25px;
  border-color: #808080;
}

.grid td {
  height: 25px;
  font: 17px/20px "Liberation Mono", monospace;
  background-color: #efeeff;
}

.grid td:nth-child(1) {
  padding: 0 0 0 5px;
  background-color: #f0f0f0;
  border-color: #808080;
}

.grid td:nth-child(2) {
  padding-left: 3px;
  background-color: #fff;
}

.grid td:nth-child(3), .grid td:nth-child(5) {
  padding-bottom: 3px;
  font-family: "Noto Sans CJK SC", sans-serif;
  font-size: 18px;
}

.grid td:nth-child(3) {
  padding-left: 5px;
  background-color: #f0f0f0;
}

.s-mark { width: 17px; }
.s-no { width: 117px; }
.s-name { width: 86px; }
.s-baby { width: 72px; }
.s-type { width: 31px; }
.s-case { width: 95px; }
.s-code { width: 111px; }

.grid-v {
  display: flex;
  flex-direction: column;
  align-items: center;
}

.grid-v button {
  width: 22px;
  height: 24px;
  display: grid;
  place-items: center;
}

.grid-v .thumb {
  width: 19px;
  height: 22px;
  margin: auto 0;
  background-color: #cdcdcd;
}

.grid-h {
  display: flex;
}

.grid-h .thumb {
  width: 52%;
  margin: 1px auto 1px 0;
  background-color: #cdcdcd;
}

.total {
  flex: none;
  height: 24px;
  margin: 2px 0 6px;
  padding: 0 1px;
  border: 1px solid #a0a0a0;
  background-color: #f0f0f0;
}

.note {
  flex: none;
  display: flex;
  align-items: center;
  height: 27px;
  margin-bottom: 3px;
  padding-left: 7px;
}

.note label {
  width: 72px;
  margin-right: 6px;
  font-family: "Noto Sans CJK SC", sans-serif;
  font-size: 18px;
  text-align-last: justify;
  white-space: nowrap;
}

.note .field {
  width: 199px;
  background-color: #fff;
}

.note .btn {
  width: 30px;
  height: 27px;
  margin-left: 3px;
  display: grid;
  place-items: center;
}

/* bottom bars */
.toolbar {
  flex: none;
  display: flex;
  align-items: center;
  gap: 7px;
  height: 34px;
  padding-left: 4px;
  background-color: #efeeff;
  border-bottom: 1px solid #a0a0a0;
}

.toolbar button {
  display: flex;
  align-items: center;
  gap: 6px;
  font-family: "Noto Sans CJK SC", sans-serif;
  font-size: 18px;
}

.toolbar button:disabled {
  color: #aaa;
  text-shadow: 1px 1px #fff;
}

.toolbar svg {
  width: 20px;
  height: 20px;
}

.toolbar .exit {
  margin-left: 111px;
}

.taskbar {
  flex: none;
  height: 29px;
  display: flex;
  padding: 2px 0 3px 6px;
  border-top: 1px solid #fff;
  border-bottom: 2px solid #c0c0c0;
}

.taskbar button {
  width: 103px;
  border: 2px solid;
  border-color: #808080 #fff #fff #808080;
  background-color: #f6f6f6;
}

.taskbar::after {
  content: "";
  margin-left: 6px;
  border-left: 1px solid #a0a0a0;
}

.statusbar {
  flex: none;
  height: 25px;
  display: grid;
  grid-template-columns: 87px 97px 310px 359px minmax(0, 1fr);
  gap: 3px;
  padding-top: 1px;
}

.statusbar span {
  padding-top: 1px;
  border: 1px solid;
  border-color: #a0a0a0 #fff transparent #a0a0a0;
  text-align: center;
  white-space: nowrap;
}

/* red frame drawn over the splitter */
.marker {
  position: absolute;
  top: 88px;
  right: 469px;
  width: 54px;
  height: 779px;
  border: 4px solid #ff1e10;
  border-radius: 4px;
  pointer-events: none;
}

.dock {
  position: absolute;
  top: 888px;
  right: 0;
  width: 5px;
  height: 79px;
  border: 1px solid #5b8fd6;
  border-right: none;
  background-color: #cfe3fa;
}

.sprite {
  position: absolute;
  width: 0;
  height: 0;
}
```
